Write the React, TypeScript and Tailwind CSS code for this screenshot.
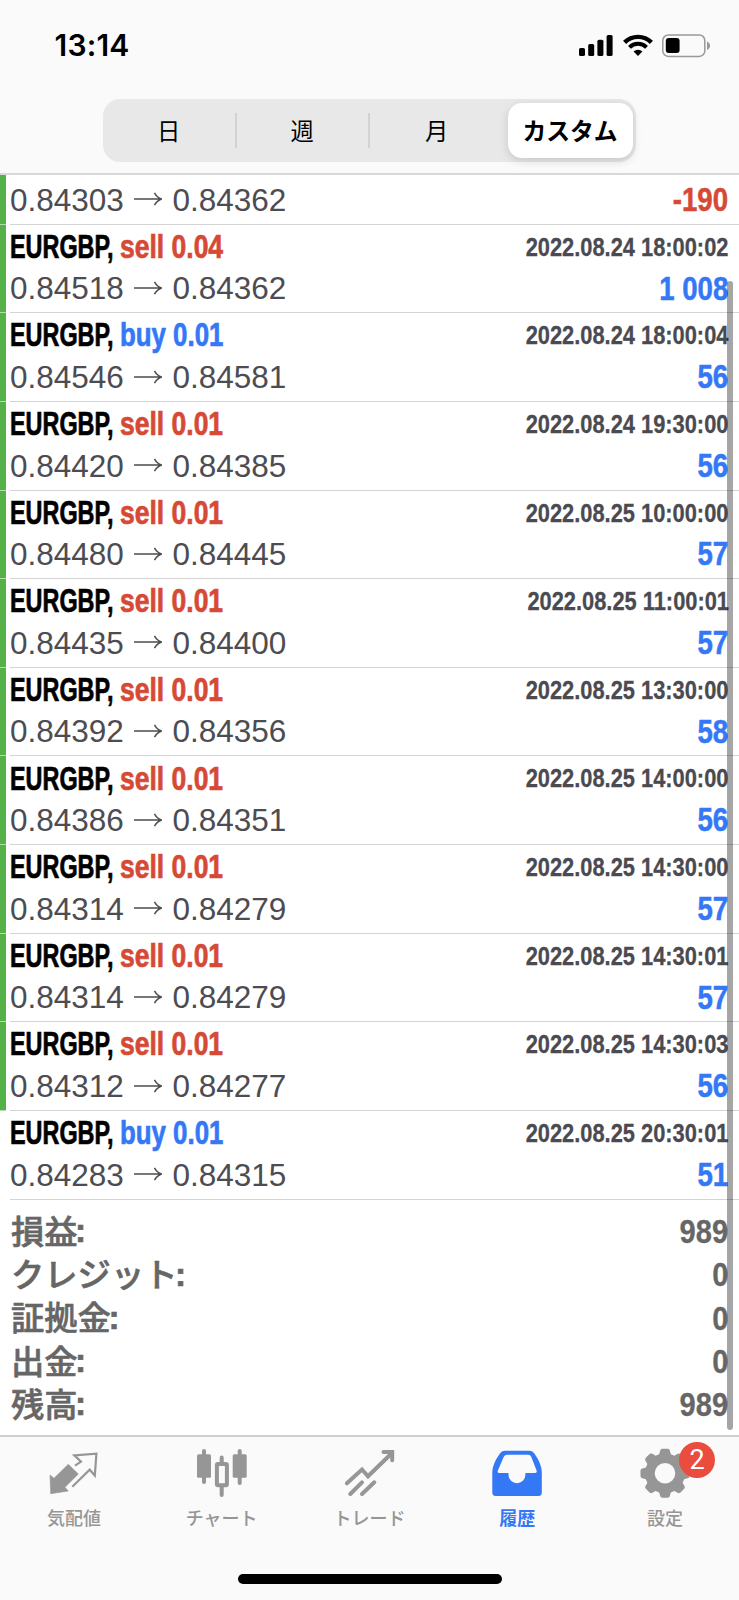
import type { ReactNode } from 'react';
import { clsx } from 'clsx';

type Deal = {
  side?: 'buy' | 'sell';
  volume?: string;
  time?: string;
  open: string;
  close: string;
  profit: string;
  marked: boolean;
};

const deals: Deal[] = [
  { open: '0.84303', close: '0.84362', profit: '-190', marked: true },
  { side: 'sell', volume: '0.04', time: '2022.08.24 18:00:02', open: '0.84518', close: '0.84362', profit: '1 008', marked: true },
  { side: 'buy', volume: '0.01', time: '2022.08.24 18:00:04', open: '0.84546', close: '0.84581', profit: '56', marked: true },
  { side: 'sell', volume: '0.01', time: '2022.08.24 19:30:00', open: '0.84420', close: '0.84385', profit: '56', marked: true },
  { side: 'sell', volume: '0.01', time: '2022.08.25 10:00:00', open: '0.84480', close: '0.84445', profit: '57', marked: true },
  { side: 'sell', volume: '0.01', time: '2022.08.25 11:00:01', open: '0.84435', close: '0.84400', profit: '57', marked: true },
  { side: 'sell', volume: '0.01', time: '2022.08.25 13:30:00', open: '0.84392', close: '0.84356', profit: '58', marked: true },
  { side: 'sell', volume: '0.01', time: '2022.08.25 14:00:00', open: '0.84386', close: '0.84351', profit: '56', marked: true },
  { side: 'sell', volume: '0.01', time: '2022.08.25 14:30:00', open: '0.84314', close: '0.84279', profit: '57', marked: true },
  { side: 'sell', volume: '0.01', time: '2022.08.25 14:30:01', open: '0.84314', close: '0.84279', profit: '57', marked: true },
  { side: 'sell', volume: '0.01', time: '2022.08.25 14:30:03', open: '0.84312', close: '0.84277', profit: '56', marked: true },
  { side: 'buy', volume: '0.01', time: '2022.08.25 20:30:01', open: '0.84283', close: '0.84315', profit: '51', marked: false },
];

const totals = [
  { label: '損益', value: '989' },
  { label: 'クレジット', value: '0' },
  { label: '証拠金', value: '0' },
  { label: '出金', value: '0' },
  { label: '残高', value: '989' },
];

const periods = ['日', '週', '月'];

function StatusBar() {
  return (
    <div className="flex h-[98.5px] items-start justify-between pl-[54.5px] pr-[28px] pt-[34px]">
      <div className="font-['Inter'] text-[30px] font-semibold leading-[23px] tracking-[0.2px] text-black">13:14</div>
      <div className="flex items-start">
        <svg width="34" height="23" viewBox="0 0 34 23" className="mr-[10px]">
          <rect x="0" y="14" width="6" height="8" rx="1.6" />
          <rect x="9.2" y="10" width="6" height="12" rx="1.6" />
          <rect x="18.4" y="5.7" width="6" height="16.3" rx="1.6" />
          <rect x="27.6" y="1" width="6" height="21" rx="1.6" />
        </svg>
        <svg width="30" height="23" viewBox="0 0 30 23" className="mr-[9px]" fill="none" stroke="#000">
          <path d="M1.6 8.4A19 19 0 0 1 28.4 8.4" strokeWidth="4.4" />
          <path d="M6.5 13.3A12 12 0 0 1 23.5 13.3" strokeWidth="4" />
          <path d="M15 22L10.6 17.6A6.2 6.2 0 0 1 19.4 17.6Z" fill="#000" stroke="none" />
        </svg>
        <svg width="49" height="24" viewBox="0 0 49 24" fill="none">
          <rect x="0.8" y="1" width="42" height="21.4" rx="5.5" stroke="#999" strokeWidth="1.5" />
          <rect x="3.8" y="4" width="13.8" height="15" rx="3" fill="#000" />
          <path d="M45 7.5C47.6 8.4 48 10.6 48 11.7C48 12.8 47.6 15 45 15.9Z" fill="#999" />
        </svg>
      </div>
    </div>
  );
}

function PeriodTabs() {
  return (
    <div className="mx-[103px] flex h-[63.5px] items-center rounded-[17px] bg-[#e8e8e8] font-['Noto_Sans_CJK_JP',sans-serif] text-[23.3px] text-black">
      {periods.map((period, i) => (
        <button
          key={period}
          className={clsx('h-[35px] w-[133.5px] leading-[33px]', i < periods.length - 1 && 'border-r-2 border-[#d2d2d4]')}
        >
          {period}
        </button>
      ))}
      <button className="ml-[4px] h-[55px] w-[125px] whitespace-nowrap rounded-[14px] bg-white text-[23.8px] font-bold leading-[52px] shadow-[0_3px_10px_rgba(0,0,0,0.14)]">
        カスタム
      </button>
    </div>
  );
}

function PriceArrow() {
  return (
    <svg width="28" height="14" viewBox="0 0 28 14" className="-mt-[2px] ml-[10.5px] mr-[10px]" fill="none" stroke="#4c4c52" strokeWidth="1.5">
      <path d="M0 7H27M20.5 0.8Q23 5.5 27.5 7Q23 8.5 20.5 13.2" />
    </svg>
  );
}

function DealRow({ deal }: { deal: Deal }) {
  const sideColor = deal.side === 'buy' ? 'text-[#3478f6]' : 'text-[#d64a35]';
  const profitColor = deal.profit.startsWith('-') ? 'text-[#d64a35]' : 'text-[#3478f6]';

  return (
    <div className="flex h-[88.64px] shrink-0 first:-mt-[38.4px]">
      <div className={clsx('w-1.5', deal.marked && 'border-b border-[#b5dcb0] bg-[#54b248]')} />
      <div className="ml-1 flex-1 border-b border-[#d4d4d4] pr-[10.5px]">
        <div className="flex h-[45px] items-center justify-between font-bold">
          <div className="flex items-center text-[32.5px] [-webkit-text-stroke:0.7px]">
            <span className="w-[110px] origin-left scale-x-[0.72] whitespace-nowrap text-black">EURGBP,</span>
            {deal.side && (
              <span className={clsx('origin-left whitespace-nowrap', deal.side === 'buy' ? 'scale-x-[0.795]' : 'scale-x-[0.815]', sideColor)}>
                {deal.side} {deal.volume}
              </span>
            )}
          </div>
          <span className="origin-right scale-x-[0.84] whitespace-nowrap text-[26px] text-[#4a4a50] [-webkit-text-stroke:0.3px]">{deal.time}</span>
        </div>
        <div className="flex h-[38.5px] items-center justify-between text-[31.5px]">
          <div className="flex items-center text-[#4c4c52]">
            {deal.open}
            <PriceArrow />
            {deal.close}
          </div>
          <span className={clsx('origin-right scale-x-[0.85] whitespace-nowrap text-[32.5px] font-bold [-webkit-text-stroke:0.5px]', profitColor)}>
            {deal.profit}
          </span>
        </div>
      </div>
    </div>
  );
}

function QuotesIcon() {
  return (
    <>
      <path d="M2 28L6 31.3L20.3 17.3L30.3 27L17 40.3L20.3 44L2.7 46.7Z" fill="currentColor" strokeWidth="0.6" />
      <path d="M27 18.7L33 14.7L26.3 8.3L48.4 6.6L46.8 28.5L41.7 22.7L24.3 39.7" fill="none" strokeWidth="2.2" strokeLinejoin="miter" />
    </>
  );
}

function ChartIcon() {
  return (
    <g fill="none" strokeWidth="4" strokeLinecap="round">
      <path d="M8 4V35M43.7 4V36M25.7 10.5V15M25.7 40V48" />
      <rect x="1" y="7.3" width="14" height="23.4" rx="1.5" fill="currentColor" stroke="none" />
      <rect x="36.7" y="7.3" width="14" height="23.4" rx="1.5" fill="currentColor" stroke="none" />
      <rect x="20.9" y="16.9" width="10" height="21.4" rx="1" />
    </g>
  );
}

function TradeIcon() {
  return (
    <g fill="none" strokeWidth="4" strokeLinecap="round" strokeLinejoin="miter">
      <path d="M3.9 36.3L19 22.5L25 29.3L49 6" />
      <path d="M40.5 5H49.2V13.3" />
      <path d="M19 35.3L7.3 47M31.3 35.3L19 47" />
    </g>
  );
}

function HistoryIcon() {
  return (
    <path
      fill="currentColor"
      stroke="none"
      fillRule="evenodd"
      d="M13.5 3.7H38.8Q41.8 3.7 43.4 6.4Q50.8 17 50.8 25V45.5Q50.8 49 47.3 49H4.8Q1.3 49 1.3 45.5V25Q1.3 17 8.9 6.4Q10.5 3.7 13.5 3.7ZM16 7.7Q13.8 7.7 12.8 9.8L6.9 23.6Q6 26 8.4 26H17.5V27.8A8.4 8.4 0 0 0 34.4 27.8V26H43.8Q46.2 26 45.6 23.6L40.2 9.8Q39.4 7.7 37.2 7.7Z"
    />
  );
}

// radius and angle of the points that make up one tooth of the gear
const tooth = [
  [20, -17],
  [21.4, -14.5],
  [24, -11],
  [24.7, -7],
  [24.7, 7],
  [24, 11],
  [21.4, 14.5],
  [20, 17],
];

function SettingsIcon() {
  const points = Array.from({ length: 8 }, (_, i) =>
    tooth.map(([r, a]) => {
      const angle = ((i * 45 + a) * Math.PI) / 180;
      return `${(26 + r * Math.sin(angle)).toFixed(2)} ${(26.3 - r * Math.cos(angle)).toFixed(2)}`;
    })
  ).flat();
  return (
    <path
      fill="currentColor"
      stroke="none"
      fillRule="evenodd"
      d={`M${points.join('L')}ZM15.7 26.3A10.3 10.3 0 1 0 36.3 26.3A10.3 10.3 0 1 0 15.7 26.3Z`}
    />
  );
}

function TabItem({ label, active, badge, children }: { label: string; active?: boolean; badge?: string; children: ReactNode }) {
  return (
    <button className={clsx('flex flex-1 flex-col items-center pt-[10px]', active ? 'text-[#3478f6]' : 'text-[#969696]')}>
      <span className="relative">
        <svg width="52" height="52" viewBox="0 0 52 52" stroke="currentColor">
          {children}
        </svg>
        {badge && (
          <span className="absolute -top-[5px] left-[40px] flex h-9 w-9 items-center justify-center rounded-full bg-[#ea4d3d] font-['Roboto'] text-[27px] text-white">
            {badge}
          </span>
        )}
      </span>
      <span className={clsx("mt-[5px] font-['Noto_Sans_CJK_JP',sans-serif] text-[18px] leading-[27px]", active ? 'font-bold' : 'font-medium')}>
        {label}
      </span>
    </button>
  );
}

export default function App() {
  return (
    <div className="relative flex h-[1600px] w-[739px] flex-col overflow-hidden bg-white font-['Liberation_Sans',Arial,sans-serif]">
      <header className="h-[174.5px] shrink-0 border-b-2 border-[#d8d8d8] bg-[#fafafa]">
        <StatusBar />
        <PeriodTabs />
      </header>

      <main className="flex h-[1260.5px] shrink-0 flex-col overflow-hidden">
        {deals.map((deal, i) => (
          <DealRow key={i} deal={deal} />
        ))}
        <div className="pl-[11px] pr-[10.5px] pt-[10.5px] text-[#666]">
          {totals.map((row) => (
            <div key={row.label} className="flex h-[43.3px] items-center justify-between font-bold">
              <span className="-mt-[5px] flex items-center font-['Noto_Sans_CJK_JP',sans-serif] text-[33.3px] font-medium leading-[43px] [-webkit-text-stroke:0.6px]">
                {row.label}
                <span className="-ml-[2.5px] mt-[3px] font-['Liberation_Sans'] font-bold">:</span>
              </span>
              <span className="origin-right scale-x-[0.88] text-[33px] [-webkit-text-stroke:0.3px]">{row.value}</span>
            </div>
          ))}
        </div>
      </main>

      <footer className="flex flex-1 flex-col items-center border-t-2 border-[#d0d0d0] bg-[#fafafa]">
        <nav className="flex h-[137px] w-full">
          <TabItem label="気配値"><QuotesIcon /></TabItem>
          <TabItem label="チャート"><ChartIcon /></TabItem>
          <TabItem label="トレード"><TradeIcon /></TabItem>
          <TabItem label="履歴" active><HistoryIcon /></TabItem>
          <TabItem label="設定" badge="2"><SettingsIcon /></TabItem>
        </nav>
        <div className="h-[10px] w-[264px] rounded-full bg-black" />
      </footer>

      {/* scroll indicator */}
      <div className="absolute right-[6px] top-[281px] h-[1149px] w-[6px] rounded-full bg-black/35" />
    </div>
  );
}
